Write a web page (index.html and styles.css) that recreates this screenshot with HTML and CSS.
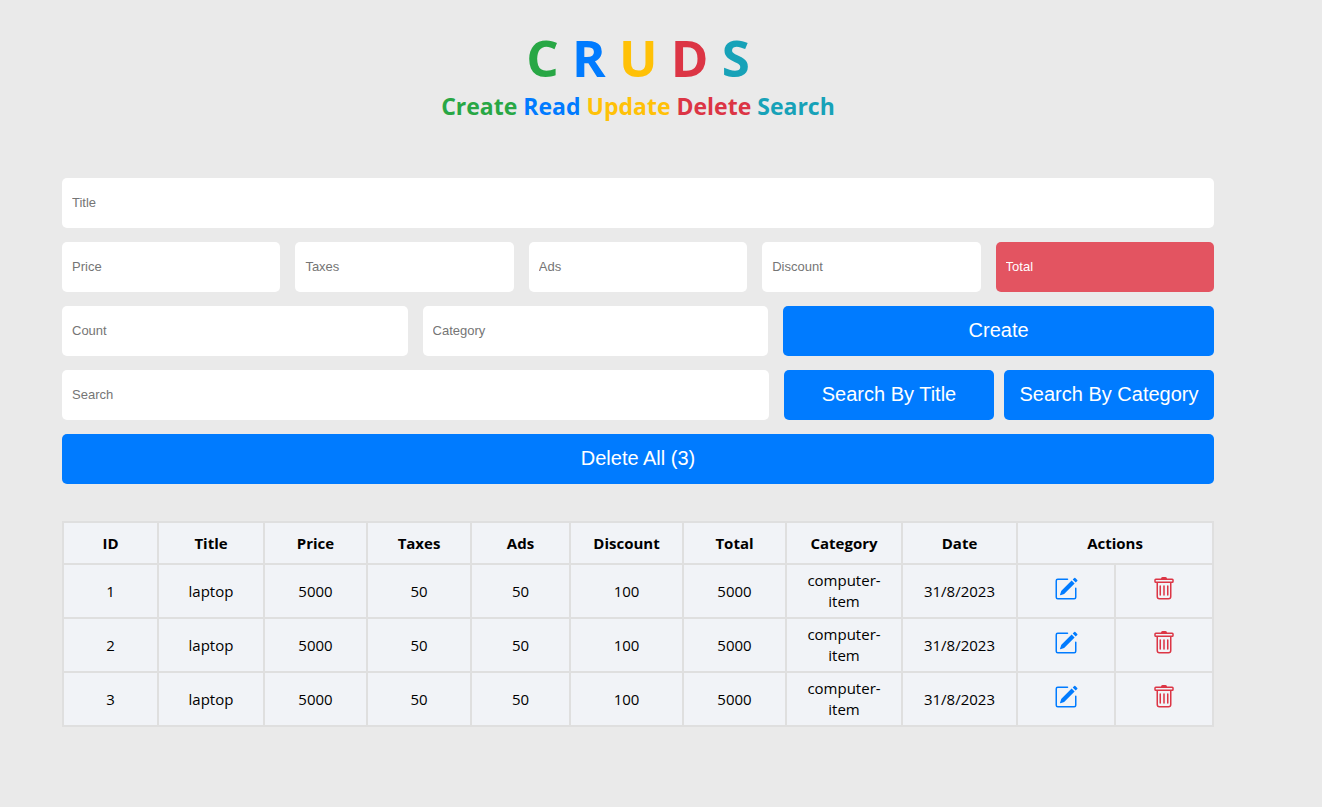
FILE: index.html
```html
<!DOCTYPE html>
<html lang="en">
<head>
<meta charset="utf-8">
<meta name="viewport" content="width=device-width, initial-scale=1">
<title>CRUDS</title>
<link rel="stylesheet" href="styles.css">
</head>
<body>
<svg class="sprite" aria-hidden="true">
  <symbol id="edit" viewBox="0 0 16 16">
    <path d="M15.502 1.94a.5.5 0 0 1 0 .706L14.459 3.69l-2-2L13.502.646a.5.5 0 0 1 .707 0l1.293 1.293zm-1.75 2.456-2-2L4.939 9.21a.5.5 0 0 0-.121.196l-.805 2.414a.25.25 0 0 0 .316.316l2.414-.805a.5.5 0 0 0 .196-.12l6.813-6.814z"/>
    <path fill-rule="evenodd" d="M1 13.5A1.5 1.5 0 0 0 2.5 15h11a1.5 1.5 0 0 0 1.5-1.5v-6a.5.5 0 0 0-1 0v6a.5.5 0 0 1-.5.5h-11a.5.5 0 0 1-.5-.5v-11a.5.5 0 0 1 .5-.5H9a.5.5 0 0 0 0-1H2.5A1.5 1.5 0 0 0 1 2.5v11z"/>
  </symbol>
  <symbol id="trash" viewBox="0 0 16 16">
    <path d="M5.5 5.5A.5.5 0 0 1 6 6v6a.5.5 0 0 1-1 0V6a.5.5 0 0 1 .5-.5Zm2.5 0a.5.5 0 0 1 .5.5v6a.5.5 0 0 1-1 0V6a.5.5 0 0 1 .5-.5Zm3 .5a.5.5 0 0 0-1 0v6a.5.5 0 0 0 1 0V6Z"/>
    <path d="M14.5 3a1 1 0 0 1-1 1H13v9a2 2 0 0 1-2 2H5a2 2 0 0 1-2-2V4h-.5a1 1 0 0 1-1-1V2a1 1 0 0 1 1-1H6a1 1 0 0 1 1-1h2a1 1 0 0 1 1 1h3.5a1 1 0 0 1 1 1v1ZM4.118 4 4 4.059V13a1 1 0 0 0 1 1h6a1 1 0 0 0 1-1V4.059L11.882 4H4.118ZM2.5 3h11V2h-11v1Z"/>
  </symbol>
</svg>
<main class="page">
  <header class="head">
    <h1 class="head-title"><span class="green">C</span> <span class="blue">R</span> <span class="yellow">U</span> <span class="red">D</span> <span class="teal">S</span></h1>
    <h2 class="head-sub"><span class="green">Create</span> <span class="blue">Read</span> <span class="yellow">Update</span> <span class="red">Delete</span> <span class="teal">Search</span></h2>
  </header>
  <form class="form">
    <input class="field" type="text" placeholder="Title" aria-label="Title">
    <div class="row row-price">
      <input class="field" type="text" placeholder="Price" aria-label="Price">
      <input class="field" type="text" placeholder="Taxes" aria-label="Taxes">
      <input class="field" type="text" placeholder="Ads" aria-label="Ads">
      <input class="field" type="text" placeholder="Discount" aria-label="Discount">
      <input class="field total" type="text" placeholder="Total" aria-label="Total" readonly>
    </div>
    <div class="row row-create">
      <input class="field" type="text" placeholder="Count" aria-label="Count">
      <input class="field" type="text" placeholder="Category" aria-label="Category">
      <button class="btn" type="button">Create</button>
    </div>
    <div class="row row-search">
      <input class="field" type="text" placeholder="Search" aria-label="Search">
      <div class="search-buttons">
        <button class="btn" type="button">Search By Title</button>
        <button class="btn" type="button">Search By Category</button>
      </div>
    </div>
    <button class="btn" type="button">Delete All (3)</button>
  </form>
  <table class="items">
    <colgroup>
      <col class="c-id"><col class="c-title"><col class="c-price"><col class="c-taxes"><col class="c-ads"><col class="c-discount"><col class="c-total"><col class="c-category"><col class="c-date"><col class="c-action"><col class="c-action">
    </colgroup>
    <thead>
      <tr><th>ID</th><th>Title</th><th>Price</th><th>Taxes</th><th>Ads</th><th>Discount</th><th>Total</th><th>Category</th><th>Date</th><th colspan="2">Actions</th></tr>
    </thead>
    <tbody>
      <tr><td>1</td><td>laptop</td><td>5000</td><td>50</td><td>50</td><td>100</td><td>5000</td><td>computer-item</td><td>31/8/2023</td>
        <td><button class="icon-btn blue" type="button" aria-label="Edit item 1"><svg class="icon"><use href="#edit"/></svg></button></td>
        <td><button class="icon-btn red" type="button" aria-label="Delete item 1"><svg class="icon"><use href="#trash"/></svg></button></td></tr>
      <tr><td>2</td><td>laptop</td><td>5000</td><td>50</td><td>50</td><td>100</td><td>5000</td><td>computer-item</td><td>31/8/2023</td>
        <td><button class="icon-btn blue" type="button" aria-label="Edit item 2"><svg class="icon"><use href="#edit"/></svg></button></td>
        <td><button class="icon-btn red" type="button" aria-label="Delete item 2"><svg class="icon"><use href="#trash"/></svg></button></td></tr>
      <tr><td>3</td><td>laptop</td><td>5000</td><td>50</td><td>50</td><td>100</td><td>5000</td><td>computer-item</td><td>31/8/2023</td>
        <td><button class="icon-btn blue" type="button" aria-label="Edit item 3"><svg class="icon"><use href="#edit"/></svg></button></td>
        <td><button class="icon-btn red" type="button" aria-label="Delete item 3"><svg class="icon"><use href="#trash"/></svg></button></td></tr>
    </tbody>
  </table>
</main>
</body>
</html>
```

FILE: styles.css
```css
* { box-sizing: border-box; margin: 0; padding: 0; }

body {
  background: #eaeaea;
  color: #000;
  font-family: "Segoe UI", "Open Sans", "Noto Sans", sans-serif;
  font-size: 15px;
  line-height: 21px;
}

.sprite { display: none; }

.page { padding: 24px 108px 24px 62px; }

.green { color: #28a745; }
.blue { color: #007bff; }
.yellow { color: #ffc107; }
.red { color: #dc3545; }
.teal { color: #17a2b8; }

.head { text-align: center; margin-bottom: 56px; }
.head-title { font-size: 51px; line-height: 66px; }
.head-sub { font-size: 23px; line-height: 32px; }

.form { display: grid; gap: 14px; }
.row { display: grid; gap: 15px; }
.row-price { grid-template-columns: repeat(5, 1fr); }
.row-create { grid-template-columns: 30% 30% 1fr; }
.row-search { grid-template-columns: 1fr 430px; }
.search-buttons { display: grid; grid-template-columns: 1fr 1fr; gap: 10px; }

.field,
.btn {
  width: 100%;
  min-width: 0;
  height: 50px;
  border: 0;
  border-radius: 5px;
  font-family: Arial, "Liberation Sans", sans-serif;
}

.field {
  padding: 0 10px 2px;
  background: #fff;
  font-size: 13px;
}
.field::placeholder { color: #757575; }

.total { background: #e35461; }
.total::placeholder { color: #fff; }

.btn {
  padding-bottom: 2px;
  background: #007bff;
  color: #fff;
  font-size: 20px;
  cursor: pointer;
}

.items {
  width: 100%;
  margin-top: 37px;
  table-layout: fixed;
  border-collapse: collapse;
  background: #f1f3f7;
  text-align: center;
}
.items th,
.items td { border: 2px solid #dfdfdf; }
.items th { padding: 10px 10px 9px; }
.items td { padding: 5px 10px; vertical-align: middle; }

.c-id { width: 95px; }
.c-title { width: 106px; }
.c-price { width: 103px; }
.c-taxes { width: 104px; }
.c-ads { width: 99px; }
.c-discount { width: 113px; }
.c-total { width: 103px; }
.c-category { width: 116px; }
.c-date { width: 115px; }
.c-action { width: 98px; }

.icon-btn {
  display: block;
  margin: 0 auto;
  padding-bottom: 4px;
  border: 0;
  background: none;
  cursor: pointer;
}
.icon { display: block; width: 24px; height: 24px; fill: currentColor; }
```
